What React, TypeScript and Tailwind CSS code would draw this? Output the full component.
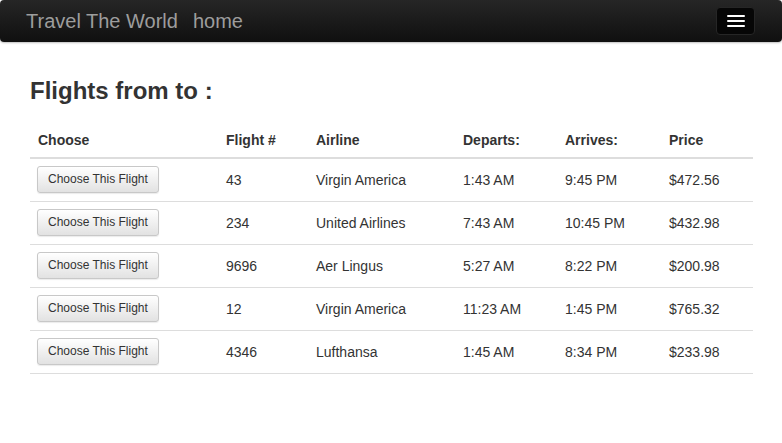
const flights = [
  { num: '43', airline: 'Virgin America', departs: '1:43 AM', arrives: '9:45 PM', price: '$472.56' },
  { num: '234', airline: 'United Airlines', departs: '7:43 AM', arrives: '10:45 PM', price: '$432.98' },
  { num: '9696', airline: 'Aer Lingus', departs: '5:27 AM', arrives: '8:22 PM', price: '$200.98' },
  { num: '12', airline: 'Virgin America', departs: '11:23 AM', arrives: '1:45 PM', price: '$765.32' },
  { num: '4346', airline: 'Lufthansa', departs: '1:45 AM', arrives: '8:34 PM', price: '$233.98' },
]

function Navbar() {
  return (
    <nav className="flex h-[42px] items-center rounded-[4px] bg-gradient-to-b from-[#262626] to-[#101010] pl-[26px] pr-[27px] shadow-[0_1px_2px_rgba(0,0,0,0.25)]">
      <span className="text-[20px] leading-none text-[#9d9d9d]">Travel The World</span>
      <span className="ml-[15px] text-[20px] leading-none text-[#9d9d9d]">home</span>
      <button className="ml-auto flex h-[28px] w-[39px] flex-col items-center justify-center gap-[3px] rounded-[4px] border border-[#262626] bg-[#060606]">
        <span className="block h-[2px] w-[18px] rounded-[1px] bg-white" />
        <span className="block h-[2px] w-[18px] rounded-[1px] bg-white" />
        <span className="block h-[2px] w-[18px] rounded-[1px] bg-white" />
      </button>
    </nav>
  )
}

export default function App() {
  return (
    <div className="min-h-[443px] bg-white font-['Liberation_Sans',Arial,sans-serif] text-[14px] text-[#333]">
      <Navbar />
      <main className="pl-[30px] pr-[29px]">
        <h2 className="mt-[36px] mb-[18px] text-[24px] font-bold leading-[26px] text-[#333]">Flights from to :</h2>
        <table className="w-full border-collapse">
          <thead>
            <tr className="border-b-2 border-[#ddd] text-left">
              <th className="w-[188px] px-[8px] pt-[8px] pb-[7px] font-bold leading-[20px]">Choose</th>
              <th className="w-[90px] px-[8px] pt-[8px] pb-[7px] font-bold leading-[20px]">Flight #</th>
              <th className="w-[147px] px-[8px] pt-[8px] pb-[7px] font-bold leading-[20px]">Airline</th>
              <th className="w-[102px] px-[8px] pt-[8px] pb-[7px] font-bold leading-[20px]">Departs:</th>
              <th className="w-[104px] px-[8px] pt-[8px] pb-[7px] font-bold leading-[20px]">Arrives:</th>
              <th className="px-[8px] pt-[8px] pb-[7px] font-bold leading-[20px]">Price</th>
            </tr>
          </thead>
          <tbody>
            {flights.map((f) => (
              <tr key={f.num} className="h-[43px] border-b border-[#ddd]">
                <td className="px-[7px] py-[7px] align-middle">
                  <button className="h-[27px] rounded-[3px] border border-[#c8c8c8] bg-gradient-to-b from-white to-[#e2e2e2] px-[10px] text-[12px] leading-[25px] text-[#333] shadow-[0_1px_1px_rgba(0,0,0,0.08)]">
                    Choose This Flight
                  </button>
                </td>
                <td className="px-[8px] align-middle leading-[20px]">{f.num}</td>
                <td className="px-[8px] align-middle leading-[20px]">{f.airline}</td>
                <td className="px-[8px] align-middle leading-[20px]">{f.departs}</td>
                <td className="px-[8px] align-middle leading-[20px]">{f.arrives}</td>
                <td className="px-[8px] align-middle leading-[20px]">{f.price}</td>
              </tr>
            ))}
          </tbody>
        </table>
      </main>
    </div>
  )
}
